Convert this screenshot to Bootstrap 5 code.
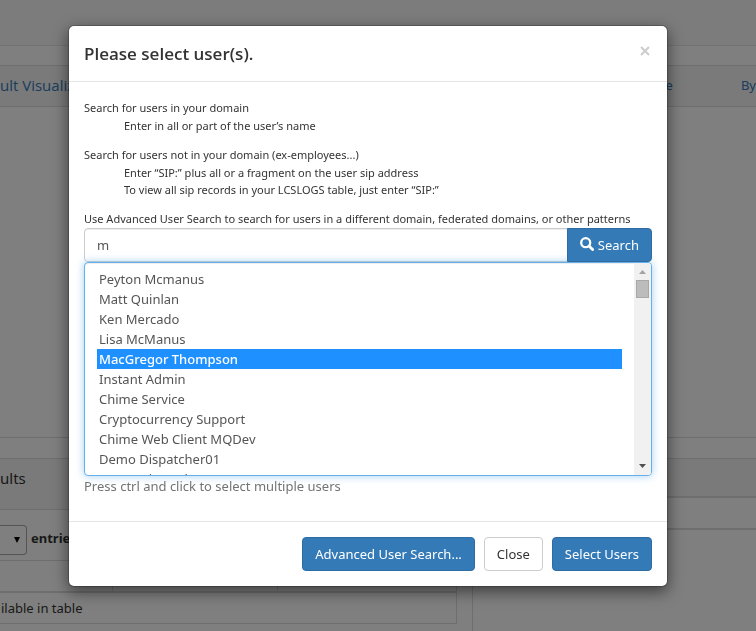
<!DOCTYPE html>
<html lang="en">
<head>
<meta charset="utf-8">
<meta name="viewport" content="width=device-width, initial-scale=1">
<title>Please select user(s).</title>
<link href="https://cdn.jsdelivr.net/npm/bootstrap@5.3.0/dist/css/bootstrap.min.css" rel="stylesheet">
<style>
  body { font-family: "Noto Sans", "Open Sans", sans-serif; font-size: 13px; line-height: 20px; color: #333; background: #fff; overflow: hidden; }
  a { color: #337ab7; text-decoration: none; }

  /* dashboard behind the dialog */
  .top-strip { height: 46px; background: #f8f8f8; border-bottom: 1px solid #e7e7e7; margin-bottom: 19px; }
  .panel-box { border-top: 1px solid #ddd; border-bottom: 1px solid #ddd; }
  .panel-title-row { background: #f5f5f5; border-bottom: 1px solid #ddd; }
  .view-tabs { height: 41px; padding-bottom: 2px; }
  .view-tabs a { color: #337ab7; }
  .view-tabs .view-name { font-family: "Open Sans", "Noto Sans", sans-serif; font-size: 15px; font-weight: 500; }
  .chart-space { height: 330px; }
  .panel-box + .lower-row { margin-top: 20px; }
  .results-panel { flex: 0 0 473px; padding-bottom: 20px; border: solid #ddd; border-width: 1px 1px 0 0; }
  .results-title { height: 51px; font-size: 15px; padding-top: 9px; }
  .results-tools { padding-top: 15px; height: 50px; }
  .results-tools label { padding-top: 3px; }
  .page-size { width: 27px; height: 30px; padding: 0; border: 1px solid #aaa; border-left: 0; border-radius: 0 4px 4px 0; appearance: none; color: transparent;
    background: #fff url("data:image/svg+xml,%3Csvg xmlns='http://www.w3.org/2000/svg' viewBox='0 0 6 6'%3E%3Cpath d='M0 0h6L3 6z'/%3E%3C/svg%3E") no-repeat 14px 11px / 6px 6px; }
  .results-table { width: 457px; border: 1px solid #ddd; border-left: 0; border-collapse: separate; border-spacing: 0; }
  .results-table th { height: 32px; border-right: 1px solid #ddd; border-bottom: 2px solid #ddd; }
  .results-table th:first-child { width: 113px; }
  .results-table th:nth-child(2) { width: 165px; }
  .results-table th:last-child { border-right: 0; }
  .results-table td { height: 30px; }
  .side-panel { border: solid #ddd; border-width: 1px 0 2px 1px; margin-left: 15px; align-self: flex-start; }
  .side-title { height: 39px; background: #f5f5f5; border-bottom: 2px solid #ddd; }
  .side-body { height: 30px; }

  /* dialog */
  .user-modal { padding-right: 20px; }
  .user-modal .modal-dialog { max-width: 600px; margin: 25px auto; }
  .user-modal .modal-content { border: 1px solid rgba(0,0,0,.2); border-radius: 6px; box-shadow: 0 5px 15px rgba(0,0,0,.5); background-clip: padding-box; }
  .user-modal .modal-header { height: 56px; padding: 0 15px; border-color: #e5e5e5; }
  .user-modal .modal-title { font-family: "Open Sans", "Noto Sans", sans-serif; font-size: 17px; font-weight: 600; line-height: 24px; }
  .dismiss { background: none; border: 0; padding: 0 2px; color: #ccc; line-height: 1; margin-bottom: 5px; }
  .dismiss svg { width: 10px; height: 10px; display: block; }
  .user-modal .modal-body { padding: 17px 15px 25px; }
  .user-modal .modal-footer { padding: 15px; gap: 9px; border-color: #e5e5e5; }
  .user-modal .modal-footer > * { margin: 0; }
  .hint-text { font-size: 11px; line-height: 17px; }
  .hint-text + .hint-text { margin-top: 12px; }
  .hint-text ul { margin: 1px 0 0; padding-left: 40px; list-style: none; }
  .act { height: 34px; font-size: 13px; line-height: 20px; padding: 6px 12px; border-radius: 4px; }
  .act-blue { color: #fff; background: #337ab7; border-color: #2e6da4; }
  .act-white { color: #333; background: #fff; border-color: #ccc; }
  .search-row { margin-top: 1px; }
  .search-row .form-control { height: 34px; font-size: 13px; padding: 6px 12px; color: #555; border-color: #ccc; border-radius: 4px 0 0 4px; box-shadow: inset 0 1px 1px rgba(0,0,0,.075); }
  .search-row .act { border-radius: 0 4px 4px 0; gap: 4px; }
  .search-row svg { width: 14px; height: 14px; margin-bottom: 2px; }
  .user-list { display: block; width: 100%; height: 214px; padding: 6px 29px 6px 12px; font-size: 13px; line-height: 20px; color: #555; background: #fff; border: 1px solid #66afe9; border-radius: 4px; outline: 0; overflow: hidden; box-shadow: inset 0 1px 1px rgba(0,0,0,.075), 0 0 8px rgba(102,175,233,.6); }
  .user-list option { min-height: 20px; height: 20px; padding: 1px 2px 0; }
  .user-list option:checked { background: #1e90ff linear-gradient(#1e90ff, #1e90ff); color: #fff; font-weight: 500; }
  .list-scroll { position: absolute; top: 1px; right: 1px; bottom: 1px; width: 17px; background: #f1f1f1; border-radius: 0 3px 3px 0; padding: 7px 2px; }
  .list-scroll svg { width: 7px; height: 4px; }
  .list-thumb { width: 13px; height: 18px; margin-top: 6px; background: #bcbcbc; border: 1px solid #a8a8a8; }
  .form-note { color: #737373; }
</style>
</head>
<body>

<div class="top-strip"></div>
<section class="panel-box">
  <div class="panel-title-row view-tabs d-flex align-items-center">
    <a href="#" class="view-name me-auto">ult Visualizations</a>
    <a href="#" class="me-5 pe-3">e</a>
    <a href="#" class="ms-1">By</a>
  </div>
  <div class="chart-space"></div>
</section>
<div class="lower-row d-flex">
  <section class="results-panel">
    <div class="panel-title-row results-title">ults</div>
    <div class="results-tools d-flex gap-1">
      <select class="page-size" id="pageSize"><option>10</option></select>
      <label for="pageSize" class="fw-bold">entries</label>
    </div>
    <table class="results-table">
      <thead><tr><th></th><th></th><th></th></tr></thead>
      <tbody><tr><td colspan="3">ilable in table</td></tr></tbody>
    </table>
  </section>
  <section class="side-panel flex-fill">
    <div class="side-title"></div>
    <div class="side-body"></div>
  </section>
</div>

<div class="modal-backdrop show"></div>
<div class="modal user-modal d-block" role="dialog" aria-labelledby="dialogTitle">
  <div class="modal-dialog">
    <div class="modal-content">
      <div class="modal-header d-flex justify-content-between align-items-center">
        <h4 class="modal-title" id="dialogTitle">Please select user(s).</h4>
        <button type="button" class="dismiss" aria-label="Close">
          <svg viewBox="0 0 10 10"><path d="M1 1l8 8M9 1l-8 8" stroke="currentColor" stroke-width="2" fill="none"/></svg>
        </button>
      </div>
      <div class="modal-body">
        <div class="hint-text">Search for users in your domain
          <ul><li>Enter in all or part of the user’s name</li></ul>
        </div>
        <div class="hint-text">Search for users not in your domain (ex-employees...)
          <ul>
            <li>Enter “SIP:” plus all or a fragment on the user sip address</li>
            <li>To view all sip records in your LCSLOGS table, just enter “SIP:”</li>
          </ul>
        </div>
        <label class="hint-text d-block text-nowrap" for="userQuery">Use Advanced User Search to search for users in a different domain, federated domains, or other patterns</label>
        <div class="input-group search-row">
          <input type="text" class="form-control" id="userQuery" value="m">
          <button type="button" class="btn act act-blue d-flex align-items-center">
            <svg viewBox="0 0 14 14"><circle cx="5.700" cy="5.700" r="4.500" fill="none" stroke="currentColor" stroke-width="2.300"/><path d="M9 9l3.600 3.600" stroke="currentColor" stroke-width="2.800" stroke-linecap="round"/></svg>
            Search
          </button>
        </div>
        <div class="position-relative">
          <select multiple class="user-list" aria-label="Users">
            <option>Peyton Mcmanus</option>
            <option>Matt Quinlan</option>
            <option>Ken Mercado</option>
            <option>Lisa McManus</option>
            <option selected>MacGregor Thompson</option>
            <option>Instant Admin</option>
            <option>Chime Service</option>
            <option>Cryptocurrency Support</option>
            <option>Chime Web Client MQDev</option>
            <option>Demo Dispatcher01</option>
            <option>Demo Dispatcher02</option>
          </select>
          <div class="list-scroll d-flex flex-column align-items-center" aria-hidden="true">
            <svg viewBox="0 0 7 4"><path d="M0 4L3.500 0L7 4z" fill="#a3a3a3"/></svg>
            <div class="list-thumb"></div>
            <svg class="mt-auto" viewBox="0 0 7 4"><path d="M0 0h7L3.500 4z" fill="#505050"/></svg>
          </div>
        </div>
        <div class="form-note">Press ctrl and click to select multiple users</div>
      </div>
      <div class="modal-footer">
        <button type="button" class="btn act act-blue">Advanced User Search...</button>
        <button type="button" class="btn act act-white">Close</button>
        <button type="button" class="btn act act-blue">Select Users</button>
      </div>
    </div>
  </div>
</div>

<script src="https://cdn.jsdelivr.net/npm/bootstrap@5.3.0/dist/js/bootstrap.bundle.min.js"></script>
</body>
</html>
